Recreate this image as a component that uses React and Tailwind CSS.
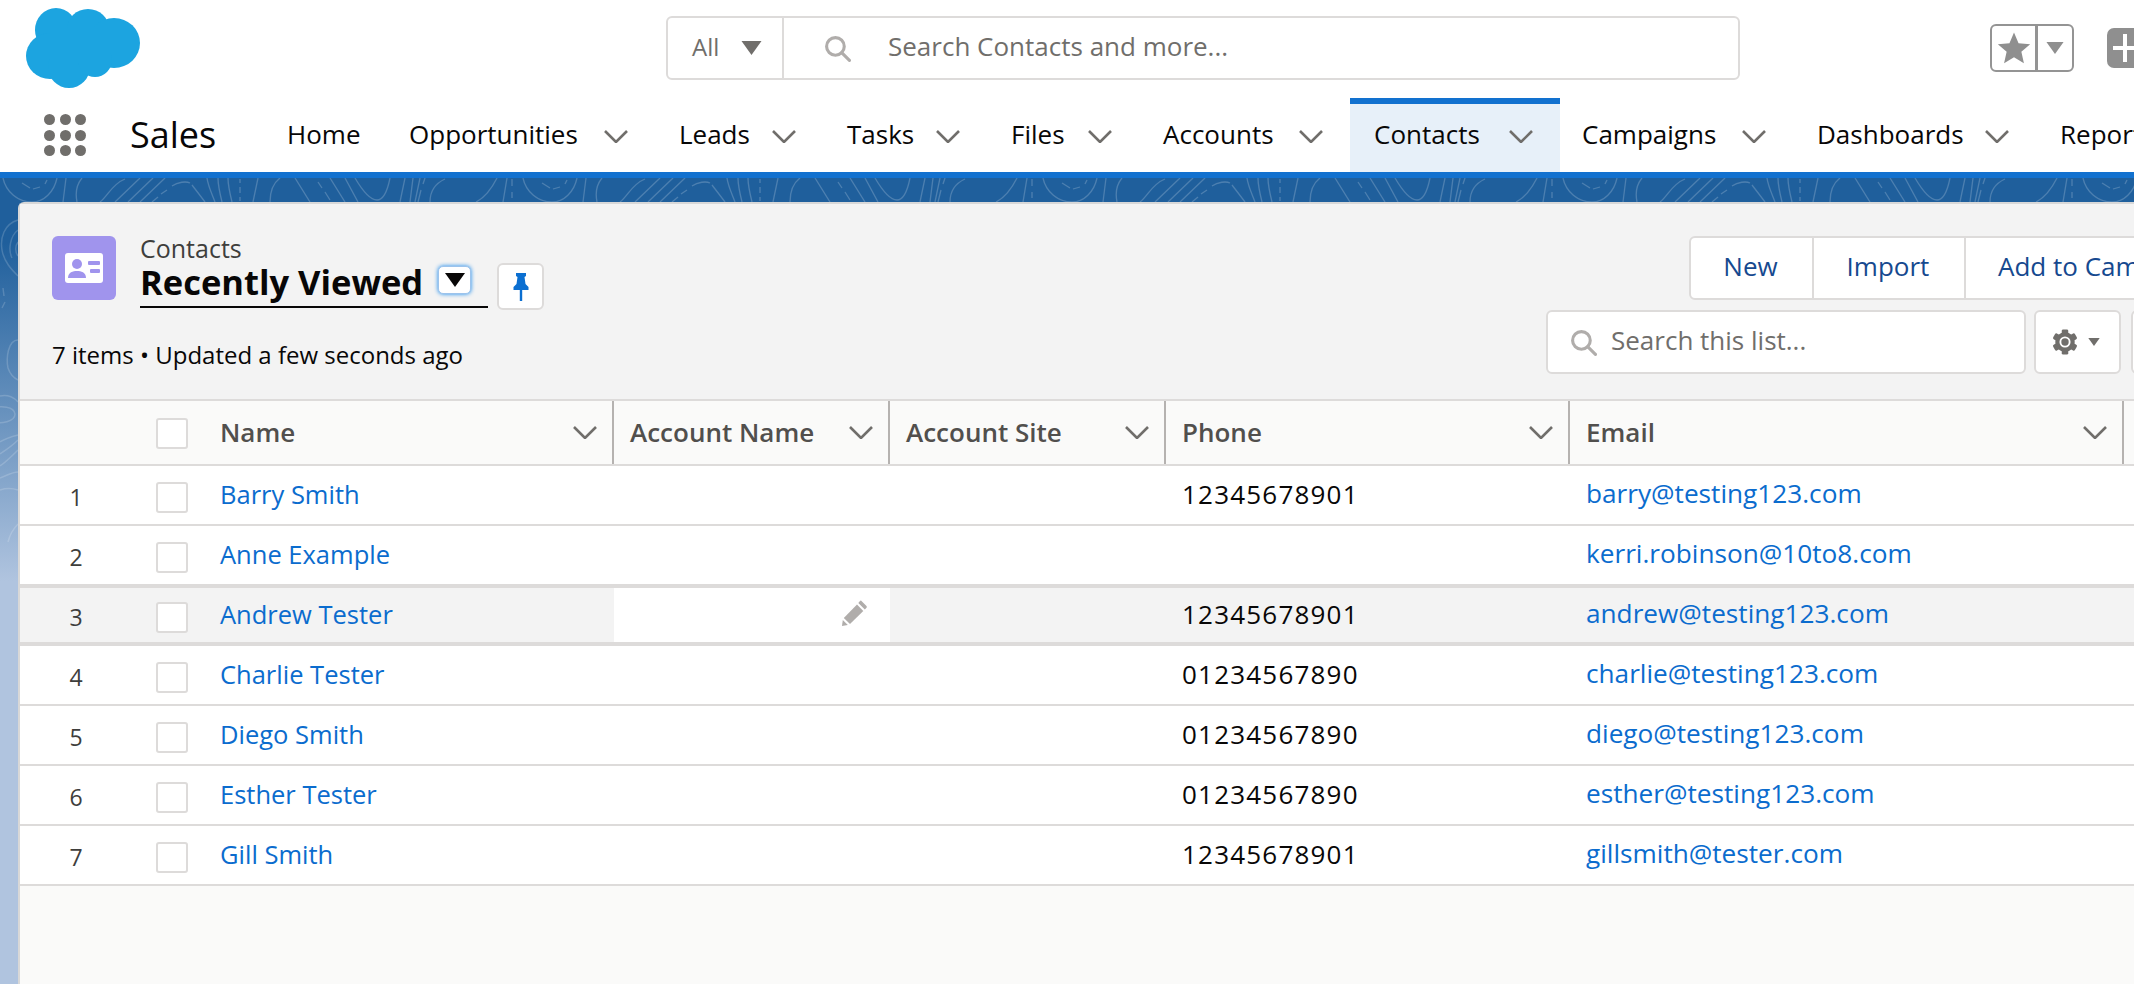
import React from "react";

const Chevron = ({ className = "" }) => (
  <svg viewBox="0 0 24 13" className={`w-[24px] h-[13px] shrink-0 ${className}`} fill="none" stroke="#706e6b" strokeWidth="2.6">
    <path d="M1 1 L12 12 L23 1" />
  </svg>
);

const Tri = ({ className = "", color = "#706e6b" }) => (
  <svg viewBox="0 0 20 14" className={className} fill={color}>
    <path d="M0 0 H20 L10 14 Z" />
  </svg>
);

const SearchIcon = ({ className = "" }) => (
  <svg viewBox="0 0 26 26" className={`shrink-0 ${className}`} fill="none" stroke="#b0adab" strokeWidth="3">
    <circle cx="11" cy="11" r="8.5" />
    <path d="M17 17 L24.5 24.5" strokeLinecap="round" />
  </svg>
);

const Cloud = () => (
  <svg viewBox="0 0 114 80" className="w-[114px] h-[80px]" fill="#1ca4e0">
    <ellipse cx="30" cy="22" rx="21" ry="22" />
    <ellipse cx="62" cy="21" rx="21" ry="20" />
    <ellipse cx="88" cy="35" rx="26" ry="25" />
    <ellipse cx="24" cy="48" rx="24" ry="23" />
    <ellipse cx="43" cy="59" rx="21" ry="21" />
    <ellipse cx="69" cy="52" rx="17" ry="17" />
    <rect x="24" y="20" width="60" height="34" />
  </svg>
);

const navItems = [
  { label: "Home", cls: "w-[122px]", chev: false },
  { label: "Opportunities", cls: "w-[270px]", chev: true },
  { label: "Leads", cls: "w-[168px]", chev: true },
  { label: "Tasks", cls: "w-[164px]", chev: true },
  { label: "Files", cls: "w-[152px]", chev: true },
  { label: "Accounts", cls: "w-[211px]", chev: true },
  { label: "Contacts", cls: "w-[210px] bg-[#e7f0f9]", chev: true, active: true },
  { label: "Campaigns", cls: "w-[233px] !pl-[22px]", chev: true },
  { label: "Dashboards", cls: "w-[243px]", chev: true },
  { label: "Reports", cls: "w-[160px]", chev: false },
];

const rows = [
  { n: 1, name: "Barry Smith", phone: "12345678901", email: "barry@testing123.com" },
  { n: 2, name: "Anne Example", phone: "", email: "kerri.robinson@10to8.com" },
  { n: 3, name: "Andrew Tester", phone: "12345678901", email: "andrew@testing123.com", hover: true },
  { n: 4, name: "Charlie Tester", phone: "01234567890", email: "charlie@testing123.com" },
  { n: 5, name: "Diego Smith", phone: "01234567890", email: "diego@testing123.com" },
  { n: 6, name: "Esther Tester", phone: "01234567890", email: "esther@testing123.com" },
  { n: 7, name: "Gill Smith", phone: "12345678901", email: "gillsmith@tester.com" },
];

const gridCols = "grid grid-cols-[110px_78px_406px_276px_276px_404px_554px_1fr]";

const Checkbox = () => (
  <div className="ml-[26px] w-[32px] h-[31px] bg-white border-2 border-[#dddbda] rounded-[3px]" />
);

const HeadCell = ({ label, first = false }) => (
  <div className={`flex items-center pr-[15px] h-full border-r-2 border-[#b5b2b0] ${first ? "pl-[12px]" : "pl-[16px]"}`}>
    <span className="text-[26px] font-semibold text-[#514f4d] whitespace-nowrap">{label}</span>
    <Chevron className="ml-auto" />
  </div>
);

const Banner = () => (
  <svg className="absolute inset-0 w-full h-full" fill="none">
    <defs>
      <pattern id="topo" x="0" y="0" width="520" height="24" patternUnits="userSpaceOnUse">
        <g stroke="#ffffff" strokeOpacity="0.2" strokeWidth="1.3">
          <path d="M3 0 C6 14 18 24 32 24 C44 24 54 14 57 0" />
          <path d="M22 5 L30 10 M33 11 L40 9 M47 2 L45 6" />
          <path d="M66 0 L63 24" />
          <path d="M82 0 C77 6 75 14 77 24" />
          <path d="M125 1 C112 6 108 18 100 24 M140 0 L115 24 M153 0 L128 24 M165 0 L140 24" />
          <path d="M152 24 L158 19 M161 16 L167 12 M172 8 C178 4 186 3 190 5 M192 7 L205 24" />
          <path d="M207 0 C208 8 212 16 215 24 M218 0 C218 8 220 16 222 24 M228 0 C228 8 230 16 232 24" />
          <path d="M240 1 V5 M240 9 V15 M240 19 V23" />
          <path d="M258 0 L253 24 M280 0 C272 6 270 14 270 24" />
          <path d="M295 0 L310 24 M318 4 L322 10 M325 14 L330 22 M330 0 L345 24 M345 0 L358 24" />
          <path d="M355 0 C362 12 370 22 377 22 C384 22 388 10 390 0" />
          <path d="M400 24 L405 0 M410 24 L413 0 M415 24 L420 0 M425 0 L423 6 M421 12 L418 24 M445 1 C434 6 430 14 430 24" />
          <path d="M497 0 C490 14 484 20 476 24 M507 0 L503 24 M512 1 V8 M512 14 V20" />
        </g>
      </pattern>
    </defs>
    <rect x="0" y="0" width="2134" height="24" fill="url(#topo)" />
    <g stroke="#ffffff" strokeOpacity="0.17" strokeWidth="1.5">
      <path d="M18 42 C4 46 0 60 2 72 C4 84 12 92 18 98" />
      <path d="M18 52 C10 58 8 72 12 80 M18 64 C15 68 15 74 18 78" />
      <path d="M3 110 L4 118 M5 124 L2 130" />
      <path d="M18 162 C8 162 6 180 8 190 C10 196 14 200 18 202" />
      <path d="M0 218 C8 216 15 220 18 224 M-5 230 C0 228 14 228 15 236 C15 244 0 246 -5 244" />
      <path d="M0 264 C6 260 14 258 18 257 M0 276 C6 272 12 268 18 262 M0 288 C6 284 12 278 18 272 M0 300 C6 298 12 294 18 294 M0 312 C6 310 12 310 18 312" />
      <path d="M8 364 C10 356 14 350 18 346" />
    </g>
  </svg>
);

export default function App() {
  return (
    <div className="relative flex flex-col w-[2134px] h-[984px] overflow-hidden bg-white font-['Open_Sans',sans-serif] text-[#080707]">
      {/* Global header */}
      <div className="relative flex items-start h-[98px] shrink-0">
        <div className="ml-[26px] mt-[8px] shrink-0"><Cloud /></div>
        <div className="ml-[526px] mt-[16px] w-[1074px] shrink-0 h-[64px] flex items-center bg-white border-2 border-[#dddbda] rounded-[6px]">
          <div className="w-[116px] h-full flex items-center border-r-2 border-[#dddbda] pl-[24px]">
            <span className="text-[24px] text-[#706e6b] pb-[2px]">All</span>
            <Tri className="w-[21px] h-[14px] ml-[22px]" />
          </div>
          <SearchIcon className="ml-[40px] w-[27px] h-[27px]" />
          <span className="ml-[37px] text-[26px] text-[#706e6b] pb-[3px]">Search Contacts and more...</span>
        </div>
        <div className="ml-[250px] mt-[24px] w-[84px] shrink-0 h-[48px] flex border-2 border-[#949494] rounded-[6px]">
          <div className="w-[46px] flex items-center justify-center border-r-[3px] border-[#949494]">
            <svg viewBox="0 0 24 24" className="w-[34px] h-[34px]" fill="#8f8f8f">
              <path d="M12 1 L15.2 8.6 L23.4 9.3 L17.2 14.7 L19 22.8 L12 18.5 L5 22.8 L6.8 14.7 L0.6 9.3 L8.8 8.6 Z" />
            </svg>
          </div>
          <div className="flex-1 flex items-center justify-center">
            <Tri className="w-[18px] h-[12px]" color="#8f8f8f" />
          </div>
        </div>
        <div className="ml-[33px] mt-[28px] w-[60px] h-[40px] shrink-0 bg-[#8f8f8f] rounded-[7px] relative">
          <div className="absolute left-[6px] top-[18px] w-[37px] h-[4px] bg-white" />
          <div className="absolute left-[16px] top-[6px] w-[4px] h-[28px] bg-white" />
        </div>
      </div>

      {/* Nav bar */}
      <div className="relative flex h-[80px] shrink-0 border-b-[6px] border-[#1271cf]">
        <div className="w-[130px] shrink-0 pl-[44px] pt-[16px]">
          <div className="grid grid-cols-3 gap-x-[4.5px] gap-y-[4.5px] w-[42px]">
            {Array.from({ length: 9 }).map((_, i) => (
              <div key={i} className="w-[11px] h-[11px] rounded-full bg-[#706e6b]" />
            ))}
          </div>
        </div>
        <div className="w-[133px] shrink-0 flex items-center text-[36px] leading-none">Sales</div>
        {navItems.map((it) => (
          <div key={it.label} className={`relative flex items-center shrink-0 pl-[24px] pr-[27px] ${it.cls}`}>
            {it.active && <div className="absolute left-0 right-0 top-0 h-[6px] bg-[#1271cf]" />}
            <span className="text-[26px] whitespace-nowrap pb-[2px]">{it.label}</span>
            {it.chev && <Chevron className="ml-auto mt-[2px]" />}
          </div>
        ))}
      </div>

      {/* Page body */}
      <div className="relative flex-1 min-h-0 bg-[linear-gradient(180deg,#1f5f9c_0%,#1f5f9c_8%,#b0c4df_50%,#b0c4df_100%)] pt-[24px] pl-[18px]">
        <Banner />
        <div className="relative h-full flex flex-col bg-[#fafaf9] border-l-2 border-t-2 border-[#d8d8d8] rounded-tl-[6px]">
          {/* List header */}
          <div className="flex h-[195px] shrink-0 bg-[#f3f3f3]">
            <div className="pl-[32px] flex-1">
              <div className="flex pt-[32px]">
                <div className="w-[64px] h-[64px] rounded-[6px] bg-[#a094ed] flex items-center justify-center">
                  <svg viewBox="0 0 38 30" className="w-[38px] h-[30px]">
                    <rect width="38" height="30" rx="3" fill="#fff" />
                    <circle cx="12" cy="11" r="5" fill="#a094ed" />
                    <path d="M3 25 C3 19 8 18 12 18 C16 18 21 19 21 25 Z" fill="#a094ed" />
                    <rect x="23" y="8" width="12" height="4" rx="1" fill="#a094ed" />
                    <rect x="25" y="16" width="10" height="4" rx="1" fill="#a094ed" />
                  </svg>
                </div>
                <div className="ml-[24px] relative">
                  <div className="text-[25px] leading-[30px] text-[#3e3e3c] -mt-[3px]">Contacts</div>
                  <div className="flex items-center w-[348px] h-[45px] pb-[5px] border-b-2 border-[#080707]">
                    <span className="text-[34.5px] font-bold leading-none whitespace-nowrap">Recently Viewed</span>
                    <div className="absolute left-[298px] top-[30px] w-[33px] h-[28px] bg-white rounded-[5px] border border-[#9cc3ec] shadow-[0_0_4px_#1589ee] flex items-center justify-center">
                      <Tri className="w-[20px] h-[14px]" color="#080707" />
                    </div>
                  </div>
                </div>
                <div className="ml-[9px] mt-[27px] w-[47px] h-[47px] bg-white border-2 border-[#dddbda] rounded-[6px] flex items-center justify-center">
                  <svg viewBox="0 0 16 30" className="w-[16px] h-[30px]" fill="#0b6fd1">
                    <path d="M3 1 H13 V4 L11.5 5 L12.5 12 L15.5 15 V18 H9.2 V29 H6.8 V18 H0.5 V15 L3.5 12 L4.5 5 L3 4 Z" />
                  </svg>
                </div>
              </div>
              <div className="mt-[30px] text-[24px] leading-[30px]">7 items • Updated a few seconds ago</div>
            </div>
            <div className="w-[588px] shrink-0 overflow-hidden">
              <div className="flex pl-[143px] pt-[32px]">
                <div className="flex h-[64px] shrink-0 bg-white border-2 border-[#dddbda] rounded-l-[6px] text-[26px] text-[#16498f]">
                  <div className="w-[123px] flex items-center justify-center border-r-2 border-[#dddbda] pb-[3px] pr-[2px]">New</div>
                  <div className="w-[152px] flex items-center justify-center border-r-2 border-[#dddbda] pb-[3px] pr-[2px]">Import</div>
                  <div className="w-[300px] flex items-center pl-[32px] whitespace-nowrap pb-[3px]">Add to Campaign</div>
                </div>
              </div>
              <div className="flex pt-[10px]">
                <div className="w-[480px] h-[64px] shrink-0 flex items-center bg-white border-2 border-[#dddbda] rounded-[6px] pl-[22px]">
                  <SearchIcon className="w-[27px] h-[27px]" />
                  <span className="ml-[14px] text-[26px] text-[#706e6b] pb-[3px]">Search this list...</span>
                </div>
                <div className="ml-[8px] w-[87px] h-[64px] shrink-0 flex items-center bg-white border-2 border-[#dddbda] rounded-[6px] pl-[16px]">
                  <svg viewBox="0 0 28 28" className="w-[26px] h-[26px]">
                    <g fill="#706e6b">
                      <circle cx="14" cy="14" r="10.5" />
                      {[0, 60, 120, 180, 240, 300].map((a) => (
                        <rect key={a} x="10.5" y="0.5" width="7" height="6" rx="1.5" transform={`rotate(${a} 14 14)`} />
                      ))}
                    </g>
                    <circle cx="14" cy="14" r="6" fill="#fff" />
                    <circle cx="14" cy="14" r="4" fill="#706e6b" />
                  </svg>
                  <Tri className="ml-[10px] w-[12px] h-[8px]" />
                </div>
                <div className="ml-[10px] w-[40px] h-[64px] shrink-0 bg-white border-2 border-[#dddbda] rounded-l-[6px]" />
              </div>
            </div>
          </div>

          {/* Table head */}
          <div className={`${gridCols} h-[67px] shrink-0 border-y-2 border-[#dddbda] bg-[#fafaf9]`}>
            <div />
            <div className="flex items-center pt-[2px]"><Checkbox /></div>
            <HeadCell label="Name" first />
            <HeadCell label="Account Name" />
            <HeadCell label="Account Site" />
            <HeadCell label="Phone" />
            <HeadCell label="Email" />
            <div />
          </div>

          {/* Rows */}
          {rows.map((r) => (
            <div
              key={r.n}
              className={`${gridCols} shrink-0 items-stretch text-[26px] ${
                r.hover
                  ? "bg-[#f3f3f3] border-y-4 border-[#dddbda] -mt-[2px] h-[62px]"
                  : "h-[60px] bg-white border-b-2 border-[#dddbda]"
              }`}
            >
              <div className="flex items-center justify-center pl-[2px] text-[23px] text-[#3e3e3c] pt-[5px]">{r.n}</div>
              <div className="flex items-center pt-[4px]"><Checkbox /></div>
              <div className="flex items-center pl-[12px] pb-[2px] text-[25.5px] text-[#0b6cce] whitespace-nowrap">{r.name}</div>
              <div className={`relative flex items-center ${r.hover ? "bg-white" : ""}`}>
                {r.hover && (
                  <svg viewBox="0 0 26 27" className="absolute right-[22px] top-[11px] w-[26px] h-[27px]" fill="#b0adab">
                    <path d="M19 1.5 L24.5 7 C25 7.6 25 8.2 24.5 8.8 L22.8 10.5 L16.3 4 L18 2 C18.3 1.5 18.7 1.3 19 1.5 Z" />
                    <path d="M15 5.5 L21.3 12 L8 25 L1.8 19 Z" />
                    <path d="M0.8 21 L5.8 26 L0 27 Z" />
                  </svg>
                )}
              </div>
              <div />
              <div className="flex items-center pl-[16px] pb-[2px] tracking-[1.2px]">{r.phone}</div>
              <div className="flex items-center pl-[16px] pb-[2px] text-[26.2px] text-[#0b6cce] whitespace-nowrap">{r.email}</div>
              <div />
            </div>
          ))}
        </div>
      </div>
    </div>
  );
}
